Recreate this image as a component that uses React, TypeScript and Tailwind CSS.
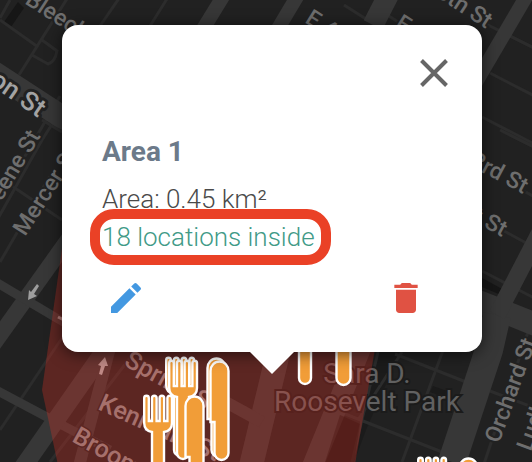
import { MdDelete } from "react-icons/md";

const MAJOR_ROADS = [
  { d: "M-10 70 62 117 300 235 482 303 542 327", width: 23 },
  { d: "M452 462 489 350 497 315", width: 28 },
  { d: "M497 315 540 232", width: 17 },
  { d: "M530 -10 475 84", width: 14 },
  { d: "M391 -10 373 25", width: 21 },
  { d: "M301 -10 276 32", width: 14 },
  { d: "M227 -10 200 34", width: 14 },
  { d: "M80 223 -10 349", width: 16 },
  { d: "M-6 281 70 326", width: 9 },
  { d: "M-6 389 60 424 110 450", width: 9 },
  { d: "M21 470 112 340", width: 18 },
  { d: "M78 470 112 340", width: 12 },
  { d: "M280 345 250 470", width: 24 },
  { d: "M368 330 311 470", width: 21 },
  { d: "M222 400 262 422", width: 12 },
];

const MINOR_ROADS = [
  "M70 -6 19 75",
  "M0 20 38 47",
  "M42 40 57 51Q55 62 48 64L32 55",
  "M122 -6 100 26",
  "M170 -6 150 26",
  "M10 0 0 18",
  "M60 96 10 182",
  "M-4 222 42 140 60 112",
  "M12 186 62 220",
  "M42 120 62 132",
  "M0 262 50 176",
  "M0 430 62 338",
  "M50 462 140 345",
  "M344 5 366 19",
  "M387 15 400 23",
  "M482 22 542 52",
  "M490 73 542 100",
  "M482 117 542 148",
  "M500 130 540 150",
  "M520 189 542 201",
  "M504 231 528 244",
  "M482 271 542 302",
  "M445 345 402 462",
  "M395 354 466 382",
  "M490 391 540 410",
  "M335 410 442 452",
  "M378 352 352 462",
  "M402 352 358 420",
  "M532 320 482 470",
];

const STREET_LABELS = [
  { text: "Bleecker St", x: 24, y: 3, angle: 33 },
  { text: "Mercer St", x: 25, y: 237, angle: -57 },
  { text: "E 4th St", x: 304, y: 22, angle: 32 },
  { text: "E 5th St", x: 394, y: 27, angle: 32 },
  { text: "Orchard St", x: 499, y: 444, angle: -70 },
  { text: "Ludlow St", x: 531, y: 452, angle: -70 },
];

// labels that fall inside the drawn area
const AREA_LABELS = [
  { text: "Spring St", x: 123, y: 365, angle: 29 },
  { text: "Kenmare St", x: 97, y: 409, angle: 24 },
  { text: "Broome St", x: 71, y: 441, angle: 29 },
];

// labels whose last letter is the part in view
const STREET_LABELS_END = [
  { text: "Greene St", x: 41, y: 136, angle: -59 },
  { text: "E 6th St", x: 486, y: 29, angle: 33 },
  { text: "E 3rd St", x: 523, y: 194, angle: 28 },
  { text: "E 1st St", x: 502, y: 237, angle: 28 },
];

const MARKERS = [
  { x: 290, y: 285 },
  { x: 165, y: 357 },
  { x: 168, y: 360 },
  { x: 143, y: 395 },
  { x: 417, y: 457 },
];

function CutleryMarker({ x, y }: { x: number; y: number }) {
  return (
    <g transform={`translate(${x} ${y})`} fill="#f19d38" stroke="#fff" strokeWidth={2.4}>
      <path d="M1.2 3a2.3 2.3 0 0 1 4.6 0V26H9V3a2.3 2.3 0 0 1 4.6 0V26H16.6V3a2.3 2.3 0 0 1 4.6 0V26H24.4V3a2.3 2.3 0 0 1 4.6 0V28c0 5-2 8-8 9V93a6 6 0 0 1-12 0V37c-6-1-7.8-4-7.8-9Z" />
      <path d="M42.5 11a9 9.5 0 0 1 18 0V93a7 7 0 0 1-14 0V62H42.5Z" />
    </g>
  );
}

function PencilIcon() {
  return (
    <svg viewBox="0 0 24 24" className="size-10" fill="currentColor">
      <path d="M3 17.25V21h3.75L17.81 9.94l-3.75-3.75L3 17.25zM20.71 7.04a1 1 0 0 0 0-1.41l-2.34-2.34a1 1 0 0 0-1.41 0l-1.83 1.83 3.75 3.75 1.83-1.83z" />
    </svg>
  );
}

function MapBackground() {
  return (
    <svg
      className="absolute inset-0 h-full w-full font-[Roboto,sans-serif]"
      viewBox="0 0 532 462"
      preserveAspectRatio="xMidYMid slice"
      aria-hidden="true"
    >
      <rect width="532" height="462" fill="#212121" />
      <path d="M18 2 24 8 11 27 4 22Z" fill="#161616" />
      <path d="M482 278 504 290 501 295 482 287Z" fill="#161616" />
      <path d="M378 352 400 352 366 430 354 462Z" fill="#1b1b1b" />
      <path d="M433 386 447 391 444 397 430 392Z" fill="#1a1a1a" />

      <g fill="none" stroke="#2c2c2c" strokeWidth={3}>
        {MINOR_ROADS.map((d) => (
          <path key={d} d={d} />
        ))}
      </g>
      <g fill="none" stroke="#373737">
        {MAJOR_ROADS.map((road) => (
          <path key={road.d} d={road.d} strokeWidth={road.width} />
        ))}
      </g>

      <g fill="#6e6e6e" stroke="#212121" strokeWidth={4} paintOrder="stroke" fontSize={23} fontWeight={500}>
        {STREET_LABELS.map((l) => (
          <text key={l.text} transform={`translate(${l.x} ${l.y}) rotate(${l.angle})`}>
            {l.text}
          </text>
        ))}
        {STREET_LABELS_END.map((l) => (
          <text key={l.text} textAnchor="end" transform={`translate(${l.x} ${l.y}) rotate(${l.angle})`}>
            {l.text}
          </text>
        ))}
      </g>
      <g fill="#8c8c8c" stroke="#212121" strokeWidth={3} paintOrder="stroke" fontSize={25} fontWeight={500}>
        {AREA_LABELS.map((l) => (
          <text key={l.text} transform={`translate(${l.x} ${l.y}) rotate(${l.angle})`}>
            {l.text}
          </text>
        ))}
      </g>
      <text
        textAnchor="end"
        transform="translate(38 118) rotate(35)"
        fontSize={26}
        fontWeight={500}
        fill="#a3a3a3"
        stroke="#212121"
        strokeWidth={6}
        strokeLinejoin="round"
        paintOrder="stroke"
      >
        E Houston St
      </text>
      <g fill="#616161" stroke="#1b1b1b" strokeWidth={4} paintOrder="stroke" fontSize={28} textAnchor="middle">
        <text x="367" y="383">Sara D.</text>
        <text x="367" y="411">Roosevelt Park</text>
      </g>

      {/* one-way arrows */}
      <path d="M37 284 39 286 34 294 37 296 28 300 29 290 31 292Z" fill="#9e9e9e" />
      <path d="M105 357 108 366 105 366 102 375 99 374 101 366 98 365Z" fill="#b0b0b0" />
      <path d="M58 317 66 321" stroke="#9e9e9e" strokeWidth={3} />

      {/* drawn area */}
      <path d="M66 220 42 390 59 470H354L380 320V220Z" fill="#e63224" fillOpacity={0.3} />
      <path d="M340 415 360 424 354 462H325Z" fill="#4b1410" fillOpacity={0.4} />

      {MARKERS.map((m) => (
        <CutleryMarker key={`${m.x}-${m.y}`} x={m.x} y={m.y} />
      ))}
    </svg>
  );
}

function AreaPopup() {
  return (
    <section
      aria-labelledby="area-title"
      className="relative w-full max-w-[420px] rounded-2xl bg-white pt-6 pb-[34px] shadow-[0_2px_16px_rgba(0,0,0,0.6)]"
    >
      <div className="flex justify-end px-6">
        <button type="button" aria-label="Close" className="flex size-12 items-center justify-center text-[#666666]">
          <svg viewBox="0 0 28 28" className="size-7" fill="none" stroke="currentColor" strokeWidth={4}>
            <path d="M1.5 1.5 26.5 26.5M26.5 1.5 1.5 26.5" />
          </svg>
        </button>
      </div>

      <div className="px-10">
        <h2 id="area-title" className="mt-[39px] text-[28px] leading-8 font-bold text-[#6c7a89]">
          Area 1
        </h2>
        <div className="mt-3 text-[26px] leading-[38px] font-light text-[#4a4a4a]">
          <p>Area: 0.45 km²</p>
          <a href="#locations" className="relative inline-block text-[#419a87]">
            18 locations inside
            <span className="absolute -top-[9px] -right-4 -bottom-[9px] -left-3 rounded-3xl border-[10px] border-[#ea4126]" />
          </a>
        </div>

        <div className="mt-[22px] flex justify-between pr-4 pl-1">
          <button type="button" aria-label="Edit area" className="text-[#4398e1]">
            <PencilIcon />
          </button>
          <button type="button" aria-label="Delete area" className="text-[#e05243]">
            <MdDelete size={40} />
          </button>
        </div>
      </div>

      <svg
        viewBox="0 0 46 23"
        className="absolute top-full left-1/2 -mt-px h-[23px] w-[46px] -translate-x-1/2"
        fill="#fff"
        aria-hidden="true"
      >
        <path d="M0 0H46L23 23Z" />
      </svg>
    </section>
  );
}

export default function App() {
  return (
    <main className="relative min-h-screen overflow-hidden bg-[#212121] pt-[25px] pr-[50px] pl-[62px] font-[Roboto,sans-serif]">
      <MapBackground />
      <AreaPopup />
    </main>
  );
}
